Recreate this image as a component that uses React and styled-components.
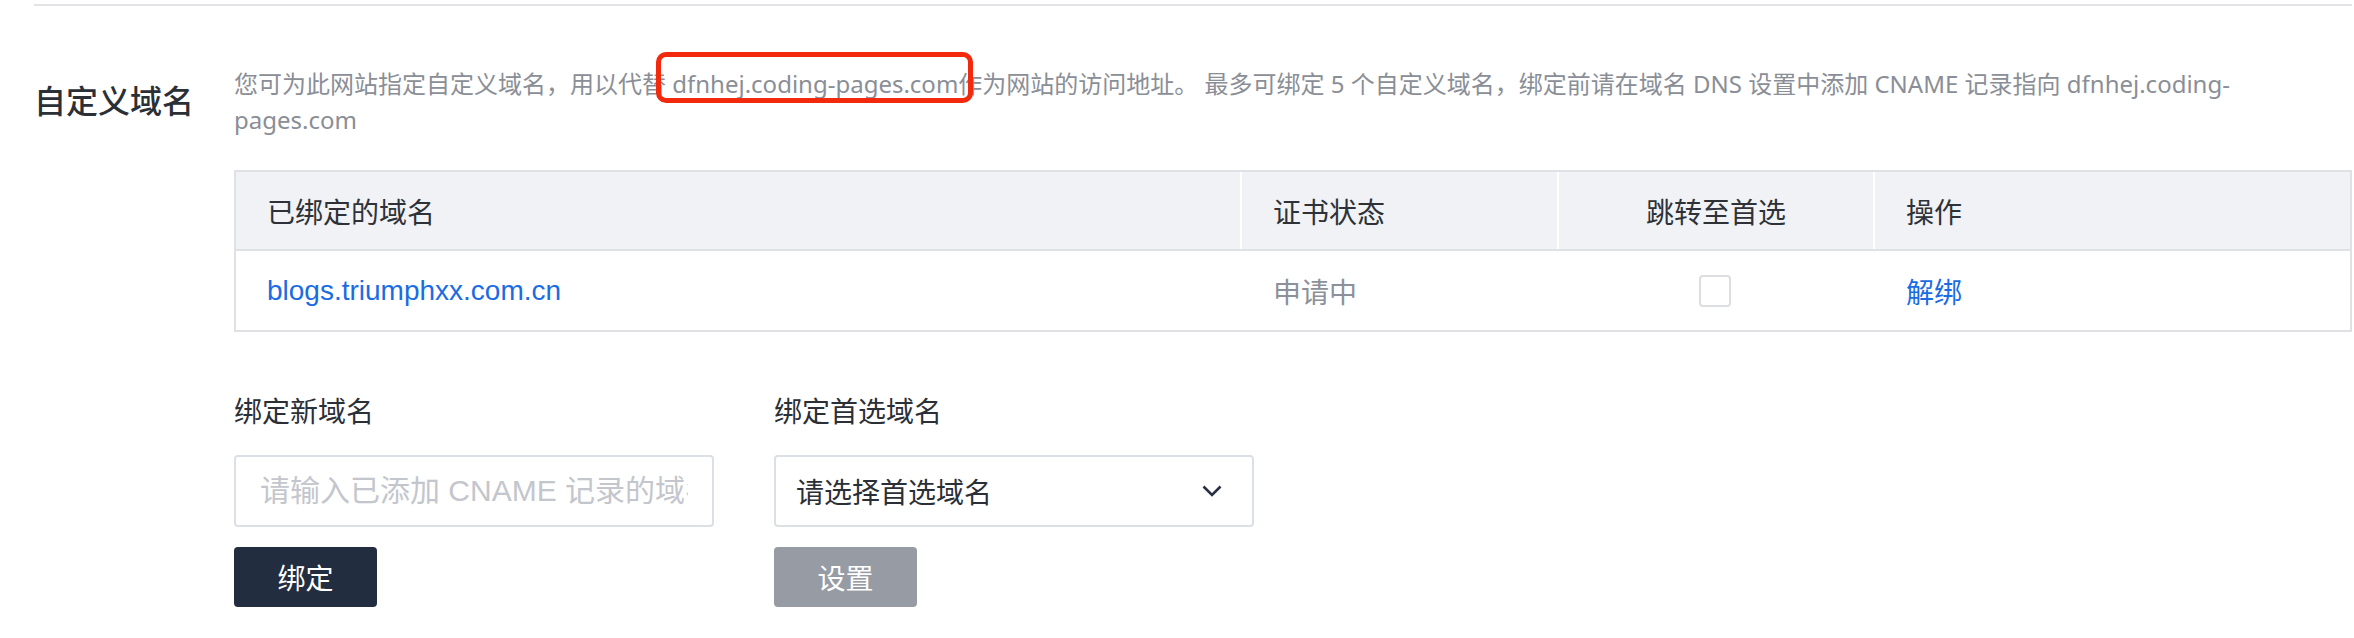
import styled, { createGlobalStyle } from "styled-components";

const GlobalStyle = createGlobalStyle`
  body {
    margin: 0;
    background: #fff;
    font-family: "Liberation Sans", "Noto Sans CJK SC", sans-serif;
  }
  * { box-sizing: border-box; }
`;

const Page = styled.div`
  padding: 4px 2px 0 34px;
`;

const Divider = styled.div`
  height: 2px;
  background: #e2e3e7;
`;

const Section = styled.section`
  display: grid;
  grid-template-columns: 200px 1fr;
  margin-top: 60px;
`;

const Heading = styled.h2`
  grid-column: 1;
  align-self: center;
  margin: 0;
  font-size: 32px;
  font-weight: 500;
  color: #2b2f36;
  line-height: 40px;
`;

const Desc = styled.p`
  grid-column: 2;
  margin: 0;
  font-family: "Noto Sans", "Noto Sans CJK SC", sans-serif;
  font-size: 24px;
  line-height: 36px;
  color: #8a8e96;
`;

const Marked = styled.span`
  position: relative;

  &::after {
    content: "";
    position: absolute;
    top: -15px;
    bottom: -3px;
    left: -16px;
    right: -15px;
    border: 5px solid #f2290d;
    border-radius: 10px;
    pointer-events: none;
  }
`;

const Content = styled.div`
  grid-column: 2;
`;

const Table = styled.div`
  margin-top: 32px;
  border: 2px solid #dfe1e5;
`;

const Row = styled.div`
  display: grid;
  grid-template-columns: 1004px 317px 316px 1fr;
  height: 79px;
  background: ${({ $head }) => ($head ? "#f0f2f5" : "#fff")};
  border-bottom: ${({ $head }) => ($head ? "2px solid #dfe1e5" : "none")};
`;

const Cell = styled.div`
  display: flex;
  align-items: center;
  justify-content: ${({ $center }) => ($center ? "center" : "flex-start")};
  padding-left: ${({ $center }) => ($center ? "0" : "31px")};
  font-size: 28px;
  color: ${({ $tone }) =>
    $tone === "link" ? "#1b6ce3" : $tone === "muted" ? "#8c9099" : "#2e3238"};
  border-left: ${({ $divider }) => ($divider ? "2px solid #fff" : "none")};
  cursor: ${({ $tone }) => ($tone === "link" ? "pointer" : "default")};
`;

const Checkbox = styled.span`
  width: 32px;
  height: 32px;
  border: 2px solid #dcdee2;
  border-radius: 4px;
  background: #fff;
`;

const Form = styled.div`
  display: flex;
  gap: 60px;
  margin-top: 61px;
`;

const Field = styled.div`
  display: flex;
  flex-direction: column;
  width: 480px;
`;

const Label = styled.label`
  font-size: 28px;
  line-height: 40px;
  color: #2b2f36;
`;

const Input = styled.input`
  margin-top: 22px;
  height: 72px;
  width: 100%;
  padding: 0 24px;
  border: 2px solid #dcdfe3;
  border-radius: 4px;
  font-family: inherit;
  font-size: 30px;
  color: #2b2f36;
  outline: none;

  &::placeholder {
    color: #c3c6cc;
  }
`;

const Select = styled.div`
  margin-top: 22px;
  height: 72px;
  display: flex;
  align-items: center;
  justify-content: space-between;
  padding: 0 30px 0 20px;
  border: 2px solid #dcdfe3;
  border-radius: 4px;
  font-size: 28px;
  color: #2b2f36;
`;

const Button = styled.button`
  margin-top: 20px;
  width: 143px;
  height: 60px;
  border: none;
  border-radius: 4px;
  background: ${({ disabled }) => (disabled ? "#969ba4" : "#222d3f")};
  color: #fff;
  font-family: inherit;
  font-size: 28px;
`;

export default function App() {
  return (
    <>
      <GlobalStyle />
      <Page>
        <Divider />
        <Section>
          <Heading>自定义域名</Heading>
          <Desc>
            您可为此网站指定自定义域名，用以代替 <Marked>dfnhej.coding-pages.com</Marked>作为网站的访问地址。 最多可绑定 5 个自定义域名，绑定前请在域名 DNS 设置中添加 CNAME 记录指向 dfnhej.coding-pages.com
          </Desc>
          <Content>
            <Table>
              <Row $head>
                <Cell>已绑定的域名</Cell>
                <Cell $divider>证书状态</Cell>
                <Cell $divider $center>跳转至首选</Cell>
                <Cell $divider>操作</Cell>
              </Row>
              <Row>
                <Cell $tone="link">blogs.triumphxx.com.cn</Cell>
                <Cell $tone="muted" style={{ paddingLeft: 33 }}>申请中</Cell>
                <Cell $center>
                  <Checkbox />
                </Cell>
                <Cell $tone="link" style={{ paddingLeft: 33 }}>解绑</Cell>
              </Row>
            </Table>
            <Form>
              <Field>
                <Label>绑定新域名</Label>
                <Input placeholder="请输入已添加 CNAME 记录的域名" />
                <Button>绑定</Button>
              </Field>
              <Field>
                <Label>绑定首选域名</Label>
                <Select>
                  请选择首选域名
                  <svg width="20" height="12" viewBox="0 0 20 12">
                    <polyline
                      points="1.5,1.5 10,10 18.5,1.5"
                      fill="none"
                      stroke="#2a2f45"
                      strokeWidth="2.6"
                    />
                  </svg>
                </Select>
                <Button disabled>设置</Button>
              </Field>
            </Form>
          </Content>
        </Section>
      </Page>
    </>
  );
}
